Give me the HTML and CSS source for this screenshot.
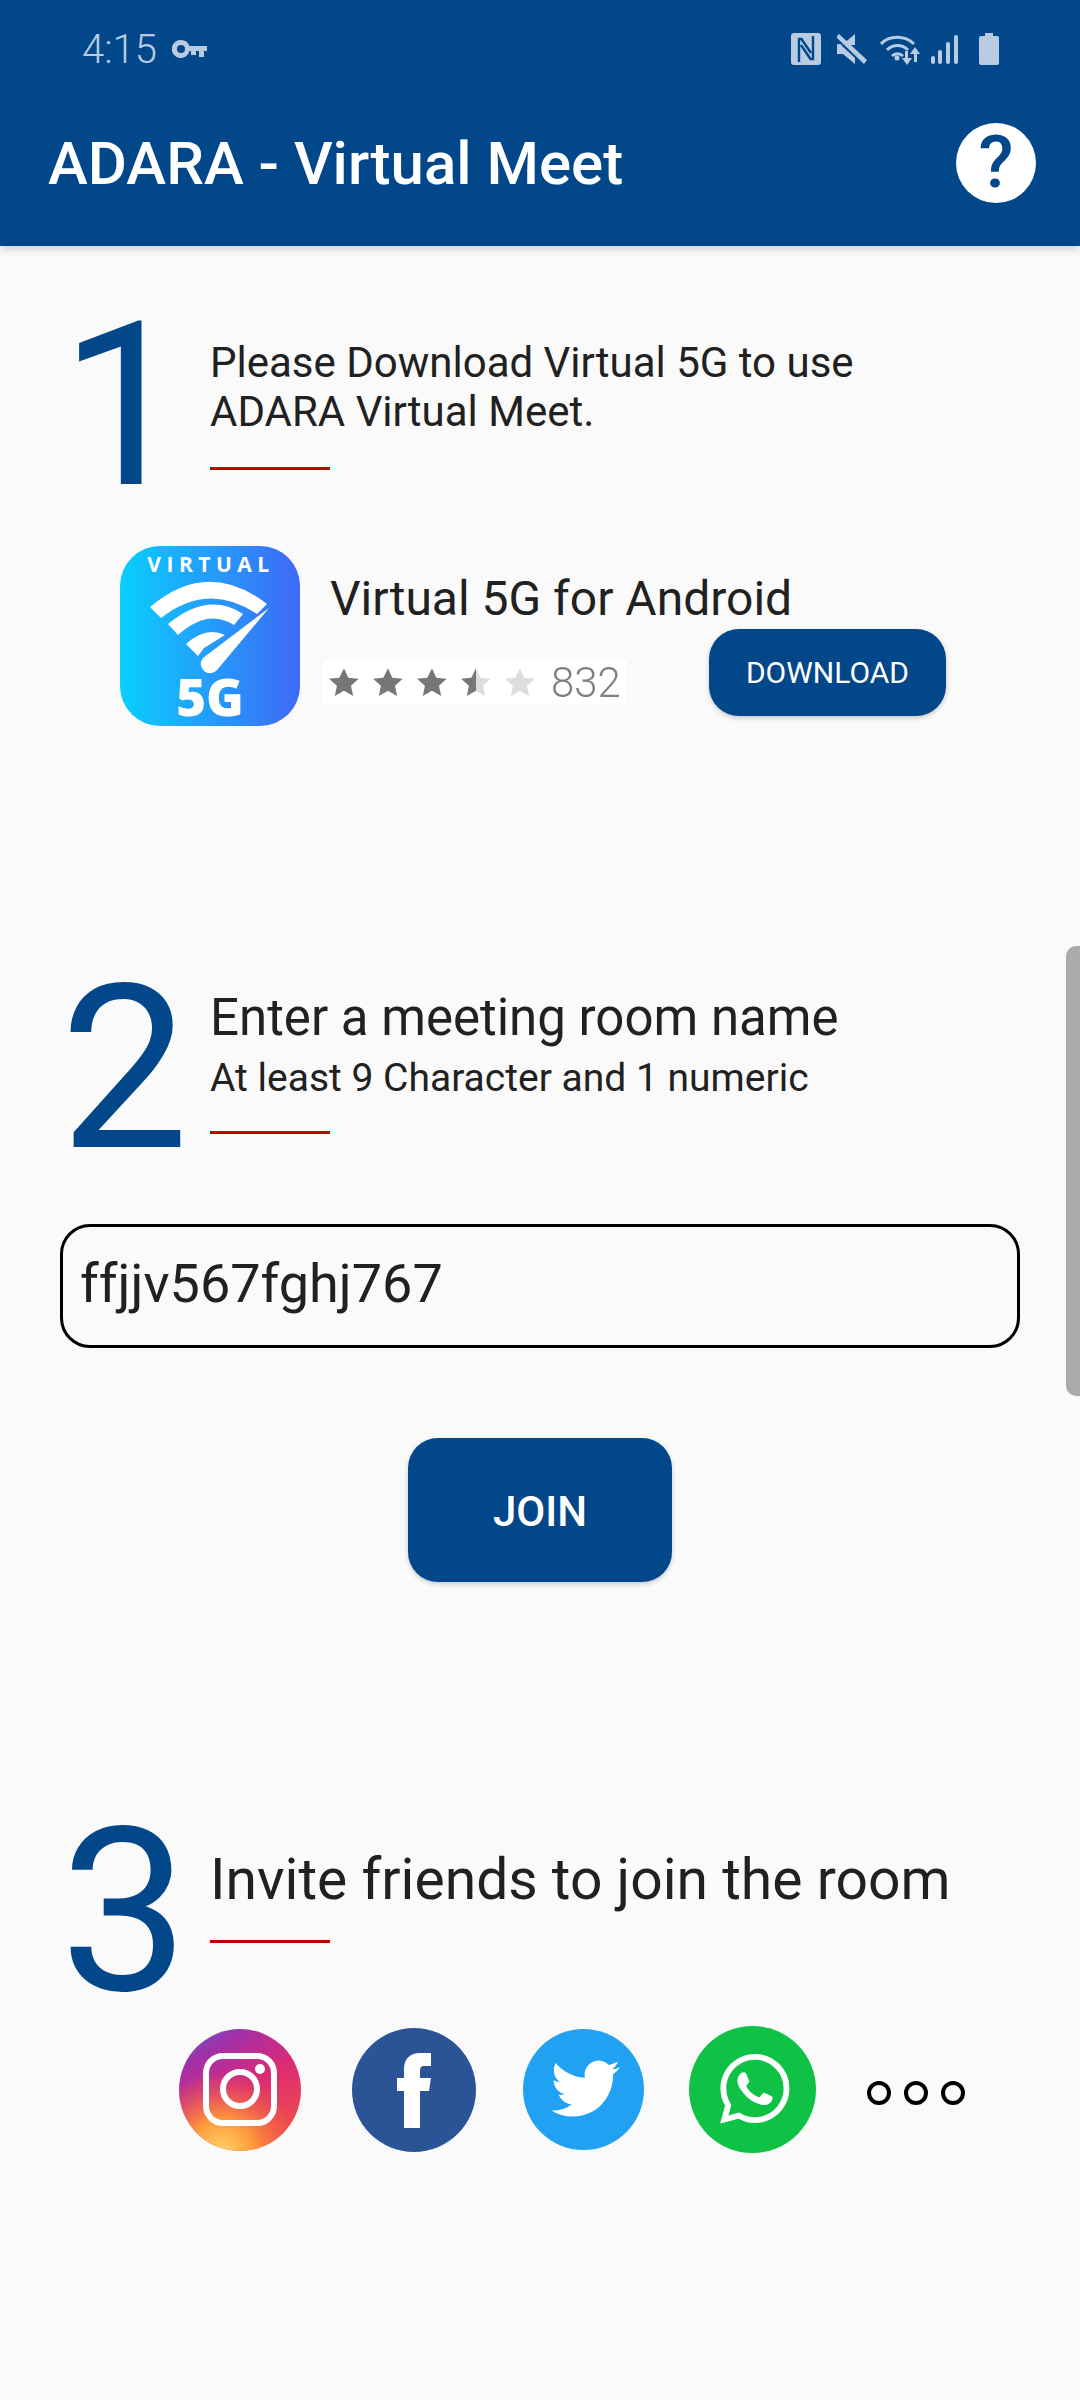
FILE: index.html
```html
<!DOCTYPE html>
<html>
<head>
<meta charset="utf-8">
<title>ADARA - Virtual Meet</title>
<link rel="stylesheet" href="styles.css">
</head>
<body>

<div id="topbar">
  <div class="statusbar">
    <span class="clock">4:15</span>
    <svg class="ic_key" viewBox="0 0 35 18"><path fill-rule="evenodd" d="M9 0a9 9 0 0 1 8.500 6H35v5h-3v6h-5v-6h-3v4h-5v-4h-1.500A9 9 0 1 1 9 0zm0 5a4 4 0 1 0 0 8 4 4 0 0 0 0-8z"/></svg>
    <div class="status_right">
      <svg class="ic_nfc" viewBox="0 0 30 32"><rect width="30" height="32" rx="3"/><path d="M8 29V6h2.500L20 20M22 3v23h-2.500L10 12" fill="none" stroke="#03478B" stroke-width="2.400"/></svg>
      <svg class="ic_mute" viewBox="0 0 30 30"><path d="M0 10h6L18 0v11zM0 10v10h6l12 10V24L3 10zM2 0l28 26-3 4L-1 3z"/></svg>
      <svg class="ic_wifi" viewBox="0 0 40 32"><g fill="none" stroke="#B8CBE1" stroke-width="3"><path d="M1 11C9 2 25 2 34 11"/><path d="M7 17c6-6 15-6 21 0"/><path d="M12 23c3-3 8-3 11 0"/></g><circle cx="17" cy="25" r="2.500"/><path d="M25 18h3v7h4l-5 7-5-7h3zM35 14l5 7h-3v8h-3v-8h-4z"/></svg>
      <svg class="ic_signal" viewBox="0 0 27 29"><rect x="0" y="21" width="4" height="8" rx="2"/><rect x="7" y="15" width="4" height="14" rx="2"/><rect x="15" y="7" width="4" height="22" rx="2"/><rect x="23" y="0" width="4" height="29" rx="2"/></svg>
      <svg class="ic_batt" viewBox="0 0 20 32"><path d="M6 0h8v3h4a2 2 0 0 1 2 2v25a2 2 0 0 1-2 2H2a2 2 0 0 1-2-2V5a2 2 0 0 1 2-2h4z"/></svg>
    </div>
  </div>
  <div class="toolbar">
    <div class="toolbar_title">ADARA - Virtual Meet</div>
    <div class="btn_help">?</div>
  </div>
</div>

<div id="div_main">

  <div class="step step_1">
    <div class="step_num">1</div>
    <div class="step_text">
      <div class="step_line">Please Download Virtual 5G to use<br>ADARA Virtual Meet.</div>
      <div class="red_rule"></div>
    </div>
  </div>

  <div class="app_row">
    <svg class="app_icon" viewBox="0 0 180 180">
      <defs>
        <linearGradient id="g_app" x1="0" y1="0" x2="1" y2="0"><stop offset="0" stop-color="#0acffe"/><stop offset="1" stop-color="#3e69f6"/></linearGradient>
      </defs>
      <rect width="180" height="180" rx="40" fill="url(#g_app)"/>
      <g fill="#fff">
        <text class="app_icon_top" x="91" y="26" text-anchor="middle">VIRTUAL</text>
        <text class="app_icon_5g" x="90" y="170" text-anchor="middle">5G</text>
        <path d="M30 61Q88 12 147 58L137 68Q88 35 41 72Z"/>
        <path d="M48 78Q88 45 123 68L114 79Q88 62 58 89Z"/>
        <path d="M66 98Q86 80 105 89L84 102 78 110Z"/>
        <path d="M149 62L97 124A9 9 0 1 1 83 112Z"/>
      </g>
    </svg>
    <div class="app_info">
      <div class="app_name">Virtual 5G for Android</div>
      <div class="app_rating">
        <svg class="stars" viewBox="0 0 206 30">
          <defs>
            <linearGradient id="g_half" x1="0" y1="0" x2="1" y2="0"><stop offset="0.5" stop-color="#777"/><stop offset="0.5" stop-color="#ddd"/></linearGradient>
            <g id="star"><path transform="scale(1.150)" d="M13 1l3.800 8.300 9 1-6.700 6.100 1.900 8.900-8-4.600-8 4.600 1.900-8.900L0 10.300l9-1z"/></g>
          </defs>
          <use href="#star" x="0" fill="#777"/>
          <use href="#star" x="44" fill="#777"/>
          <use href="#star" x="88" fill="#777"/>
          <use href="#star" x="132" fill="url(#g_half)"/>
          <use href="#star" x="176" fill="#ddd"/>
        </svg>
        <span class="rating_count">832</span>
      </div>
    </div>
    <button class="btn_download">DOWNLOAD</button>
  </div>

  <div class="step step_2">
    <div class="step_num">2</div>
    <div class="step_text">
      <div class="step_title">Enter a meeting room name</div>
      <div class="step_sub">At least 9 Character and 1 numeric</div>
      <div class="red_rule"></div>
    </div>
  </div>

  <input class="room_input" type="text" value="ffjjv567fghj767">
  <button class="btn_join">JOIN</button>

  <div class="step step_3">
    <div class="step_num">3</div>
    <div class="step_text">
      <div class="step_title">Invite friends to join the room</div>
      <div class="red_rule"></div>
    </div>
  </div>

  <div class="share_row">
    <svg class="ic_insta" viewBox="0 0 122 122">
      <defs>
        <linearGradient id="g_ig" x1="0" y1="0" x2="0.6" y2="1"><stop offset="0" stop-color="#5b5fcf"/><stop offset="0.25" stop-color="#a32fa8"/><stop offset="0.6" stop-color="#dc2b74"/><stop offset="1" stop-color="#ee4b4b"/></linearGradient>
        <radialGradient id="g_ig2" cx="0.35" cy="1" r="0.65"><stop offset="0" stop-color="#ffd366"/><stop offset="0.4" stop-color="#fd9a3c"/><stop offset="1" stop-color="#f56040" stop-opacity="0"/></radialGradient>
      </defs>
      <circle cx="61" cy="61" r="61" fill="url(#g_ig)"/>
      <circle cx="61" cy="61" r="61" fill="url(#g_ig2)"/>
      <rect x="27" y="27" width="68" height="67" rx="17" fill="none" stroke="#fff" stroke-width="6"/>
      <circle cx="61" cy="60" r="17" fill="none" stroke="#fff" stroke-width="6"/>
      <circle cx="81" cy="40" r="5" fill="#fff"/>
    </svg>
    <svg class="ic_fb" viewBox="0 0 124 124">
      <circle cx="62" cy="62" r="62" fill="#2b5496"/>
      <path fill="#fff" d="M52 100V63H45V50H52V41C52 31 58 25 68 25H79V38H72C69 38 68 40 68 43V50H79L77 63H68V100Z"/>
    </svg>
    <svg class="ic_tw" viewBox="0 0 121 121">
      <circle cx="60.500" cy="60.500" r="60.500" fill="#21a1f1"/>
      <path fill="#fff" transform="translate(28 25) scale(2.875)" d="M23.953 4.570a10 10 0 01-2.825.775 4.958 4.958 0 002.163-2.723c-.951.555-2.005.959-3.127 1.184a4.920 4.920 0 00-8.384 4.482C7.690 8.095 4.067 6.130 1.640 3.162a4.822 4.822 0 00-.666 2.475c0 1.710.870 3.213 2.188 4.096a4.904 4.904 0 01-2.228-.616v.060a4.923 4.923 0 003.946 4.827 4.996 4.996 0 01-2.212.085 4.936 4.936 0 004.604 3.417 9.867 9.867 0 01-6.102 2.105c-.390 0-.779-.023-1.170-.067a13.995 13.995 0 007.557 2.209c9.053 0 13.998-7.496 13.998-13.985 0-.210 0-.420-.015-.630A9.935 9.935 0 0024 4.590z"/>
    </svg>
    <svg class="ic_wa" viewBox="0 0 127 127">
      <circle cx="63.500" cy="63.500" r="63.500" fill="#0fc246"/>
      <path fill="#fff" transform="translate(31 28) scale(2.900)" d="M17.472 14.382c-.297-.149-1.758-.867-2.030-.967-.273-.099-.471-.148-.670.150-.197.297-.767.966-.940 1.164-.173.199-.347.223-.644.075-.297-.150-1.255-.463-2.390-1.475-.883-.788-1.480-1.761-1.653-2.059-.173-.297-.018-.458.130-.606.134-.133.298-.347.446-.520.149-.174.198-.298.298-.497.099-.198.050-.371-.025-.520-.075-.149-.669-1.612-.916-2.207-.242-.579-.487-.500-.669-.510-.173-.008-.371-.010-.570-.010-.198 0-.520.074-.792.372-.272.297-1.040 1.016-1.040 2.479 0 1.462 1.065 2.875 1.213 3.074.149.198 2.096 3.200 5.077 4.487.709.306 1.262.489 1.694.625.712.227 1.360.195 1.871.118.571-.085 1.758-.719 2.006-1.413.248-.694.248-1.289.173-1.413-.074-.124-.272-.198-.570-.347m-5.421 7.403h-.004a9.870 9.870 0 01-5.031-1.378l-.361-.214-3.741.982.998-3.648-.235-.374a9.860 9.860 0 01-1.510-5.260c.001-5.450 4.436-9.884 9.888-9.884 2.640 0 5.122 1.030 6.988 2.898a9.825 9.825 0 012.893 6.994c-.003 5.450-4.437 9.884-9.885 9.884m8.413-18.297A11.815 11.815 0 0012.050 0C5.495 0 .160 5.335.157 11.892c0 2.096.547 4.142 1.588 5.945L.057 24l6.305-1.654a11.882 11.882 0 005.683 1.448h.005c6.554 0 11.890-5.335 11.893-11.893a11.821 11.821 0 00-3.480-8.413z"/>
    </svg>
    <div class="more_dots"><span></span><span></span><span></span></div>
  </div>

</div>

<div id="div_scrollthumb"></div>

</body>
</html>
```
FILE: styles.css
```css
html, body{
margin: 0;
padding: 0;
}

body{
position: relative;
width: 1080px;
height: 2400px;
overflow: hidden;
background-color: #FAFAFA;
font-family: 'Roboto', sans-serif;
color: #212121;
}

#topbar{
height: 246px;
background-color: #03478B;
box-shadow: 0 3px 8px rgba(0,0,0,0.18);
}

.statusbar{
display: flex;
align-items: center;
height: 98px;
padding: 0 81px 0 82px;
fill: #B8CBE1;
color: #B8CBE1;
}

.clock{
font-size: 40px;
font-weight: 300;
}

.ic_key{
width: 35px;
height: 18px;
margin-left: 15px;
}

.status_right{
display: flex;
align-items: center;
margin-left: auto;
}

.ic_nfc{
width: 30px;
height: 32px;
}

.ic_mute{
width: 30px;
height: 30px;
margin-left: 16px;
}

.ic_wifi{
width: 40px;
height: 32px;
margin-left: 13px;
}

.ic_signal{
width: 27px;
height: 29px;
margin-left: 11px;
}

.ic_batt{
width: 20px;
height: 32px;
margin-left: 21px;
}

.toolbar{
display: flex;
align-items: center;
justify-content: space-between;
height: 148px;
padding: 0 44px 18px 48px;
box-sizing: border-box;
}

.toolbar_title{
font-size: 60px;
font-weight: 500;
color: #fff;
}

.btn_help{
width: 80px;
height: 80px;
border-radius: 50%;
background-color: #fff;
color: #03478B;
font-size: 72px;
font-weight: 500;
line-height: 80px;
text-align: center;
}

#div_main{
display: flex;
flex-direction: column;
}

.step{
display: flex;
padding-left: 60px;
}

.step_1{
margin-top: 78px;
}

.step_2{
margin-top: 261px;
}

.step_3{
margin-top: 248px;
}

.step_num{
width: 150px;
height: 164px;
font-size: 229px;
line-height: 164px;
color: #03478B;
}

.step_line{
font-size: 42px;
line-height: 49px;
margin-top: 14px;
}

.step_title{
font-size: 51px;
line-height: 56px;
margin-top: 3px;
}

.step_sub{
font-size: 39px;
line-height: 46px;
margin-top: 9px;
}

.red_rule{
width: 120px;
height: 3px;
background-color: #C00000;
margin-top: 30px;
}

.step_1 .red_rule{
margin-top: 31px;
}

.step_3 .step_title{
font-size: 57px;
margin-top: 22px;
}

.step_3 .red_rule{
margin-top: 32px;
}

.app_row{
display: flex;
align-items: flex-start;
margin-top: 58px;
padding-left: 120px;
}

.app_icon{
width: 180px;
height: 180px;
flex: none;
overflow: visible;
}

.app_icon_top{
font-family: 'Open Sans', sans-serif;
font-size: 21px;
font-weight: 700;
letter-spacing: 5.500px;
}

.app_icon_5g{
font-family: 'Open Sans', sans-serif;
font-size: 51px;
font-weight: 800;
}

.app_info{
display: flex;
flex-direction: column;
width: 379px;
margin-left: 30px;
}

.app_name{
font-size: 48px;
line-height: 52px;
margin-top: 27px;
white-space: nowrap;
}

.app_rating{
display: flex;
align-items: center;
width: 304px;
height: 44px;
margin: 35px 0 0 -7px;
background-color: #fff;
filter: blur(0.7px);
}

.stars{
width: 206px;
height: 30px;
margin-left: 6px;
}

.rating_count{
font-size: 42px;
font-weight: 300;
color: #808080;
margin-left: 16px;
}

.btn_download{
width: 237px;
height: 87px;
margin: 83px 0 0 0;
border: none;
border-radius: 30px;
background-color: #03478B;
color: #fff;
font-family: 'Roboto', sans-serif;
font-size: 30px;
box-shadow: 0 2px 5px rgba(0,0,0,0.2);
}

.room_input{
display: block;
width: 960px;
height: 124px;
box-sizing: border-box;
margin: 73px 0 0 60px;
padding: 0 0 6px 17px;
border: 3px solid #000;
border-radius: 30px;
background: transparent;
outline: none;
font-family: 'Roboto', sans-serif;
font-size: 54px;
color: #212121;
}

.btn_join{
display: block;
width: 264px;
height: 144px;
margin: 90px 0 0 408px;
padding: 3px 0 0 0;
border: none;
border-radius: 30px;
background-color: #03478B;
color: #fff;
font-family: 'Roboto', sans-serif;
font-size: 42px;
font-weight: 500;
box-shadow: 0 2px 5px rgba(0,0,0,0.2);
}

.share_row{
display: flex;
align-items: center;
margin-top: 32px;
padding-left: 179px;
}

.ic_insta{
width: 122px;
height: 122px;
}

.ic_fb{
width: 124px;
height: 124px;
margin-left: 51px;
}

.ic_tw{
width: 121px;
height: 121px;
margin-left: 47px;
}

.ic_wa{
width: 127px;
height: 127px;
margin-left: 45px;
}

.more_dots{
display: flex;
gap: 13px;
margin: 6px 0 0 51px;
}

.more_dots span{
display: block;
width: 24px;
height: 24px;
box-sizing: border-box;
border: 4px solid #000;
border-radius: 50%;
}

#div_scrollthumb{
position: absolute;
top: 946px;
right: 0;
width: 14px;
height: 450px;
border-radius: 10px 0 0 10px;
background-color: #ABABAB;
}
```
